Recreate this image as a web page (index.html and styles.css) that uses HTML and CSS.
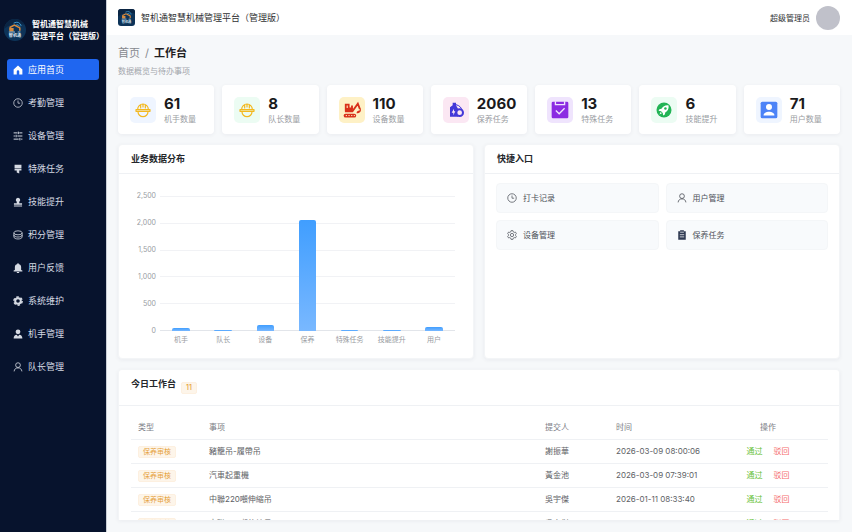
FILE: index.html
```html
<!DOCTYPE html>
<html lang="zh-CN">
<head>
  <meta charset="UTF-8">
  <meta name="viewport" content="width=device-width, initial-scale=1.0">
  <title>智机通智慧机械管理平台（管理版）</title>
  <link rel="stylesheet" href="styles.css">
</head>
<body>
  <!-- shared icons -->
  <svg class="sprite" aria-hidden="true">
    <symbol id="i-brand" viewBox="0 0 32 32">
      <rect width="32" height="32" fill="#0d3358"/>
      <path d="M0 0h32v9Q16 2 0 14z" fill="#0b2543"/>
      <path d="M14 6q8-4 11 4M17 9q4-2 6 2" fill="none" stroke="#3f9bd0" stroke-width="1.4"/>
      <path d="M9 17v-5l6-3 8 4v4" fill="none" stroke="#d98a3c" stroke-width="2.2"/>
      <path d="M8 13h6v5H8z" fill="#d98a3c"/>
      <path d="M7 19h9M20 19h4" stroke="#8fb9d8" stroke-width="1.6"/>
      <text x="16" y="26.500" text-anchor="middle" class="brand-text">智机通</text>
    </symbol>
    <symbol id="i-clock" viewBox="0 0 16 16">
      <circle cx="8" cy="8" r="6.8" fill="none" stroke="currentColor" stroke-width="1.2"/>
      <path d="M8 4v4.3h3.4" fill="none" stroke="currentColor" stroke-width="1.2"/>
    </symbol>
    <symbol id="i-user" viewBox="0 0 16 16">
      <circle cx="8" cy="5" r="3.8" fill="none" stroke="currentColor" stroke-width="1.3"/>
      <path d="M1.800 15c.3-3.600 2.600-5.600 6.200-5.600s5.900 2 6.200 5.600" fill="none" stroke="currentColor" stroke-width="1.300"/>
    </symbol>
    <symbol id="i-helmet" viewBox="0 0 24 24">
      <path d="M4 11a8 8 0 0 1 16 0M1.500 11.500h21v2.500h-21zM4.500 14.500a7.500 7.500 0 0 0 15 0M8.500 5v4M12 3.500V7.500M15.500 5v4" fill="none" stroke="#f3b81f" stroke-width="1.800" stroke-linecap="round" stroke-linejoin="round"/>
    </symbol>
  </svg>

  <aside class="sidebar">
    <div class="brand">
      <svg class="brand-logo"><use href="#i-brand"/></svg>
      <div class="brand-name">智机通智慧机械<br>管理平台（管理版）</div>
    </div>
    <nav class="menu">
      <a class="menu-item active" href="#">
        <svg class="icon" viewBox="0 0 16 16"><path fill="currentColor" d="M8 .8 15 7v8h-5v-4.500a2 2 0 0 0-4 0V15H1V7z"/></svg>应用首页</a>
      <a class="menu-item" href="#"><svg class="icon"><use href="#i-clock"/></svg>考勤管理</a>
      <a class="menu-item" href="#">
        <svg class="icon" viewBox="0 0 16 16"><path fill="none" stroke="currentColor" stroke-width="1.600" d="M1 3h6M10 3h5M1 8h2M7 8h8M1 13h8M13 13h2M8.500 1v4M5 6v4M11 11v4"/></svg>设备管理</a>
      <a class="menu-item" href="#">
        <svg class="icon" viewBox="0 0 16 16"><path fill="currentColor" d="M2.500 1h11v6h-11zM2.500 8h11v2.500H10V15L6 13.500v-3H2.500z"/></svg>特殊任务</a>
      <a class="menu-item" href="#">
        <svg class="icon" viewBox="0 0 16 16"><path fill="currentColor" d="M8 1a3.600 3.600 0 0 1 2 6.500V10h4.500v2.500h-13V10H6V7.500A3.600 3.600 0 0 1 8 1zM1.500 13.500h13V15h-13z"/></svg>技能提升</a>
      <a class="menu-item" href="#">
        <svg class="icon" viewBox="0 0 16 16"><g fill="none" stroke="currentColor" stroke-width="1.300"><ellipse cx="8" cy="4.500" rx="6.600" ry="3.200"/><path d="M1.400 4.500v6.500c0 4.500 13.200 4.500 13.200 0V4.500M1.400 8c0 4.300 13.200 4.300 13.200 0"/></g></svg>积分管理</a>
      <a class="menu-item" href="#">
        <svg class="icon" viewBox="0 0 16 16"><path fill="currentColor" d="M7 1.500V.5h2v1c2.600.500 4 2.500 4 5V11l2 1v1.500H1V12l2-1V6.500c0-2.500 1.400-4.500 4-5zM6 14.300h4a2 2 0 0 1-4 0z"/></svg>用户反馈</a>
      <a class="menu-item" href="#">
        <svg class="icon" viewBox="0 0 16 16"><circle cx="8" cy="8" r="4.500" fill="none" stroke="currentColor" stroke-width="3.200"/><circle cx="8" cy="8" r="6.600" fill="none" stroke="currentColor" stroke-width="2.400" stroke-dasharray="3.900 3.010"/></svg>系统维护</a>
      <a class="menu-item" href="#">
        <svg class="icon" viewBox="0 0 16 16"><circle cx="8" cy="4.500" r="3.800" fill="currentColor"/><path fill="currentColor" d="M1 15c0-4 2-5.500 5-6l2 3 2-3c3 .500 5 2 5 6z"/></svg>机手管理</a>
      <a class="menu-item" href="#"><svg class="icon"><use href="#i-user"/></svg>队长管理</a>
    </nav>
  </aside>

  <div class="main">
    <header class="topbar">
      <svg class="topbar-logo"><use href="#i-brand"/></svg>
      <span class="topbar-title">智机通智慧机械管理平台（管理版）</span>
      <span class="topbar-user">超级管理员</span>
      <span class="avatar"></span>
    </header>

    <main class="content">
      <div class="breadcrumb"><a href="#">首页</a><span>/</span><strong>工作台</strong></div>
      <p class="subtitle">数据概览与待办事项</p>

      <section class="stats">
        <div class="stat">
          <div class="stat-icon small blue"><svg><use href="#i-helmet"/></svg></div>
          <div><div class="stat-num">61</div><div class="stat-label">机手数量</div></div>
        </div>
        <div class="stat">
          <div class="stat-icon small green"><svg><use href="#i-helmet"/></svg></div>
          <div><div class="stat-num">8</div><div class="stat-label">队长数量</div></div>
        </div>
        <div class="stat">
          <div class="stat-icon yellow">
            <svg viewBox="0 0 24 24"><g fill="none" stroke="#d9301a" stroke-width="2.200"><path d="M4.500 13V5.500H8V10h4V6.500M3.500 13.500h9L19 4.500l2.500 6.500"/></g><path fill="#d9301a" d="M4 9.500h9V14H4zM22.500 9.500c1 4-1 6.500-5 6.500 0-2.500 1.500-3.500 3.500-3.500z"/><rect x="2" y="16.500" width="15" height="4.500" rx="2.200" fill="#d9301a"/><path d="M4.500 18.700h11" stroke="#fdecc0" stroke-width="1.200" stroke-dasharray="1.500 1.700"/></svg>
          </div>
          <div><div class="stat-num">110</div><div class="stat-label">设备数量</div></div>
        </div>
        <div class="stat">
          <div class="stat-icon small pink">
            <svg viewBox="0 0 24 24"><path fill="#4338d8" d="M7 1h5v4l3 5v12H3V8l4-3z"/><path d="M12 4q8 2 9 9" fill="none" stroke="#4338d8" stroke-width="1.500"/><circle cx="17.500" cy="16" r="5" fill="#fbe7f3" stroke="#4338d8" stroke-width="3"/><path fill="#fbe7f3" d="m9 10-3.500 6H8v4l3-6H9z"/></svg>
          </div>
          <div><div class="stat-num">2060</div><div class="stat-label">保养任务</div></div>
        </div>
        <div class="stat">
          <div class="stat-icon purple">
            <svg viewBox="0 0 24 24"><rect x="2" y="2" width="20" height="20" rx="1.500" fill="#8b2be2"/><path d="M6.500 1.500V5.500h11v-4M7 12.500l4 4 6.500-6.500" fill="none" stroke="#efe4fd" stroke-width="1.600"/></svg>
          </div>
          <div><div class="stat-num">13</div><div class="stat-label">特殊任务</div></div>
        </div>
        <div class="stat">
          <div class="stat-icon green">
            <svg viewBox="0 0 24 24"><circle cx="12" cy="12" r="9" fill="#22b455"/><path fill="#fff" d="M17.500 6.500c-4-.500-6.500 1-8.500 4l-2.500.500-1 2 3 .500 2 2 .500 3 2-1 .500-2.500c3-2 4.500-4.500 4-8.500zM8 14.500 6.500 17.500l3-1.500z"/><circle cx="13.700" cy="10.300" r="1.500" fill="#22b455"/></svg>
          </div>
          <div><div class="stat-num">6</div><div class="stat-label">技能提升</div></div>
        </div>
        <div class="stat">
          <div class="stat-icon blue">
            <svg viewBox="0 0 24 24"><rect x="2" y="2" width="20" height="20" rx="2" fill="#4c83f7"/><circle cx="12" cy="8.500" r="3.600" fill="#fff"/><path fill="#fff" d="M5.500 18.500c0-6 13-6 13 0z"/></svg>
          </div>
          <div><div class="stat-num">71</div><div class="stat-label">用户数量</div></div>
        </div>
      </section>

      <section class="panels">
        <div class="panel">
          <h2 class="panel-title">业务数据分布</h2>
          <div class="chart">
            <div class="y-axis"><span>2,500</span><span>2,000</span><span>1,500</span><span>1,000</span><span>500</span><span>0</span></div>
            <div class="plot">
              <div class="lines"><i></i><i></i><i></i><i></i><i></i><i></i></div>
              <div class="bars">
                <div class="bar" style="height: 2.44%"></div>
                <div class="bar" style="height: 0.32%"></div>
                <div class="bar" style="height: 4.4%"></div>
                <div class="bar" style="height: 82.4%"></div>
                <div class="bar" style="height: 0.52%"></div>
                <div class="bar" style="height: 0.24%"></div>
                <div class="bar" style="height: 2.84%"></div>
              </div>
            </div>
            <div class="x-axis"><span>机手</span><span>队长</span><span>设备</span><span>保养</span><span>特殊任务</span><span>技能提升</span><span>用户</span></div>
          </div>
        </div>
        <div class="panel">
          <h2 class="panel-title">快捷入口</h2>
          <div class="shortcuts">
            <button class="shortcut" type="button"><svg class="icon"><use href="#i-clock"/></svg>打卡记录</button>
            <button class="shortcut" type="button"><svg class="icon"><use href="#i-user"/></svg>用户管理</button>
            <button class="shortcut" type="button">
              <svg class="icon" viewBox="0 0 16 16"><g fill="none" stroke="currentColor" stroke-width="1.200" stroke-linejoin="round"><path d="M6.500 1h3l.5 2 1.500.900 2-.600 1.500 2.600L13.500 7.500v1l1.500 1.600-1.500 2.600-2-.600L10 13l-.5 2h-3L6 13l-1.500-.900-2 .600L1 10.100l1.500-1.600v-1L1 5.900l1.500-2.600 2 .600L6 3z"/><circle cx="8" cy="8" r="2.600"/></g></svg>设备管理</button>
            <button class="shortcut" type="button">
              <svg class="icon" viewBox="0 0 16 16"><path fill="#2f3a52" d="M2 2h3V.5h6V2h3v13.500H2z"/><path d="M5 3.500h6M4.500 7.500h7M4.500 11h7" stroke="#f8fafc" stroke-width="1.200"/></svg>保养任务</button>
          </div>
        </div>
      </section>

      <section class="panel todo">
        <div class="todo-head"><h2>今日工作台</h2><span class="tag count">11</span></div>
        <div class="todo-body">
          <table>
            <thead>
              <tr><th class="col-type">类型</th><th>事项</th><th class="col-user">提交人</th><th class="col-time">时间</th><th class="col-action">操作</th></tr>
            </thead>
            <tbody>
              <tr><td><span class="tag">保养审核</span></td><td>豬籠吊-履帶吊</td><td>謝振華</td><td>2026-03-09 08:00:06</td><td class="actions"><button type="button" class="pass">通过</button><button type="button" class="reject">驳回</button></td></tr>
              <tr><td><span class="tag">保养审核</span></td><td>汽車起重機</td><td>黃金池</td><td>2026-03-09 07:39:01</td><td class="actions"><button type="button" class="pass">通过</button><button type="button" class="reject">驳回</button></td></tr>
              <tr><td><span class="tag">保养审核</span></td><td>中聯220噸伸縮吊</td><td>吳宇傑</td><td>2026-01-11 08:33:40</td><td class="actions"><button type="button" class="pass">通过</button><button type="button" class="reject">驳回</button></td></tr>
              <tr><td><span class="tag">保养审核</span></td><td>中聯220噸伸縮吊</td><td>吳宇傑</td><td>2026-01-11 08:30:40</td><td class="actions"><button type="button" class="pass">通过</button><button type="button" class="reject">驳回</button></td></tr>
            </tbody>
          </table>
        </div>
      </section>
    </main>
  </div>
</body>
</html>
```
FILE: styles.css
```css
* {
  box-sizing: border-box;
}
body {
  margin: 0;
  height: 100vh;
  display: flex;
  overflow: hidden;
  font-family: Inter, "Noto Sans CJK SC", sans-serif;
  font-size: 8px;
  line-height: 12px;
  color: #606266;
  background: #f6f8fa;
}
h2, p {
  margin: 0;
}
a {
  color: inherit;
  text-decoration: none;
}
button {
  font: inherit;
  border: 0;
  padding: 0;
  background: none;
  cursor: pointer;
}
.sprite {
  position: absolute;
  width: 0;
  height: 0;
}
.brand-text {
  font-size: 6px;
  font-weight: 700;
  fill: #dfe9f3;
}
.icon {
  width: 10px;
  height: 10px;
  flex: none;
}

/* sidebar */
.sidebar {
  flex: none;
  width: 107px;
  border-right: 1px solid #c9ced6;
  background: #07132d;
  color: #d5dae3;
}
.brand {
  display: flex;
  align-items: center;
  gap: 6px;
  height: 59px;
  padding-left: 4px;
}
.brand-logo {
  flex: none;
  width: 22px;
  height: 22px;
  border-radius: 50%;
}
.brand-name {
  color: #fff;
  font-weight: 700;
  white-space: nowrap;
}
.menu {
  display: flex;
  flex-direction: column;
  gap: 12px;
  padding: 0 7px;
}
.menu-item {
  display: flex;
  align-items: center;
  gap: 5px;
  height: 21px;
  padding-left: 6px;
  border-radius: 3px;
  font-size: 9px;
}
.menu-item.active {
  background: #1f66f0;
  color: #fff;
}

/* right side */
.main {
  flex: 1;
  min-width: 0;
  display: flex;
  flex-direction: column;
}
.topbar {
  flex: none;
  display: flex;
  align-items: center;
  height: 35px;
  padding: 0 12px 0 11px;
  background: #fff;
  color: #303133;
}
.topbar-logo {
  width: 17px;
  height: 17px;
  border-radius: 3px;
  margin-right: 6px;
}
.topbar-title {
  flex: 1;
  font-size: 9px;
}
.avatar {
  width: 24px;
  height: 24px;
  margin-left: 6px;
  border-radius: 50%;
  background: #c0c1ca;
}
.content {
  flex: 1;
  min-height: 0;
  display: flex;
  flex-direction: column;
  padding: 12px 12px 12px 11px;
}
.breadcrumb {
  display: flex;
  gap: 5px;
  font-size: 11px;
  color: #86898f;
}
.breadcrumb strong {
  color: #1f2023;
}
.subtitle {
  margin: 6px 0 8px;
  color: #a3a6ac;
}

.stats {
  display: grid;
  grid-template-columns: repeat(7, 1fr);
  gap: 8px;
  margin-bottom: 10px;
}
.stat,
.panel {
  background: #fff;
  border-radius: 4px;
  box-shadow: 0 1px 4px rgba(30, 40, 60, 0.06);
}
.panel {
  border: 1px solid #f3f5f7;
}
.stat {
  display: flex;
  align-items: center;
  gap: 8px;
  height: 49px;
  padding-left: 12px;
}
.stat-icon {
  display: flex;
  align-items: center;
  justify-content: center;
  width: 26px;
  height: 26px;
  border-radius: 5px;
}
.stat-icon svg {
  width: 20px;
  height: 20px;
}
.stat-icon.small svg {
  width: 16px;
  height: 16px;
}
.blue { background: #eff5ff; }
.green { background: #ecfcf3; }
.yellow { background: #fef1c6; }
.pink { background: #fbe7f3; }
.purple { background: #efe4fd; }
.stat-num {
  font-size: 15px;
  font-weight: 700;
  line-height: 18px;
  color: #1a1a1c;
}
.stat-label {
  color: #999ca2;
}

.panels {
  display: grid;
  grid-template-columns: 1fr 1fr;
  gap: 10px;
  margin-bottom: 10px;
}
.panel-title {
  height: 29px;
  padding: 0 12px;
  border-bottom: 1px solid #eff1f4;
  font-size: 9px;
  line-height: 28px;
  color: #25272b;
}

/* chart */
.chart {
  display: grid;
  grid-template-columns: 26px 1fr;
  grid-template-rows: 145px 12px;
  column-gap: 4px;
  height: 184px;
  padding: 17px 18px 0 11px;
  font-size: 7px;
  color: #999ca2;
}
.y-axis {
  display: flex;
  flex-direction: column;
  justify-content: space-between;
  text-align: right;
  line-height: 10px;
}
.plot {
  display: grid;
  margin: 5px 0;
}
.lines,
.bars {
  grid-area: 1 / 1;
  display: flex;
}
.lines {
  flex-direction: column;
  justify-content: space-between;
}
.lines i {
  height: 1px;
  background: #f1f2f5;
}
.lines i:last-child {
  background: #e2e5ea;
}
.bars {
  align-items: flex-end;
  justify-content: space-around;
}
.bar {
  width: 6%;
  min-height: 1px;
  border-radius: 2px 2px 0 0;
  background: linear-gradient(#409eff, #79b8ff);
}
.x-axis {
  grid-column: 2;
  display: grid;
  grid-template-columns: repeat(7, 1fr);
  line-height: 7px;
  text-align: center;
  white-space: nowrap;
}

/* shortcuts */
.shortcuts {
  display: grid;
  grid-template-columns: 1fr 1fr;
  gap: 7px;
  padding: 9px 11px;
}
.shortcut {
  display: flex;
  align-items: center;
  gap: 6px;
  height: 30px;
  padding: 0 10px;
  border: 1px solid #f4f6f8;
  border-radius: 4px;
  background: #f8fafc;
  color: #4d5159;
}

/* todo table */
.todo {
  flex: 1;
  min-height: 0;
  overflow: hidden;
  border-bottom: 0;
  border-radius: 4px 4px 0 0;
}
.todo-head {
  display: flex;
  gap: 5px;
  height: 36px;
  padding: 8px 12px 11px;
  border-bottom: 1px solid #eff1f4;
}
.todo-head h2 {
  font-size: 9px;
  color: #25272b;
}
.tag {
  display: inline-block;
  padding: 0 4px;
  border: 1px solid #fdf0e0;
  border-radius: 2px;
  background: #fdf5ea;
  color: #e6a23c;
  font-size: 7px;
  line-height: 10px;
}
.count {
  align-self: flex-end;
  font-weight: 500;
}
.todo-body {
  padding: 9px 11px 9px 12px;
}
table {
  width: 100%;
  table-layout: fixed;
  border-collapse: collapse;
}
th,
td {
  height: 24px;
  padding: 0 7px;
  border-bottom: 1px solid #eff1f4;
  text-align: left;
  font-weight: 400;
  white-space: nowrap;
}
th {
  color: #7d8087;
}
.col-type,
.col-user {
  width: 71px;
}
.col-time {
  width: 99px;
}
.col-action {
  width: 120px;
}
.col-action,
.actions {
  text-align: center;
}
.actions button + button {
  margin-left: 11px;
}
.pass {
  color: #67c23a;
}
.reject {
  color: #f56c6c;
}
```
